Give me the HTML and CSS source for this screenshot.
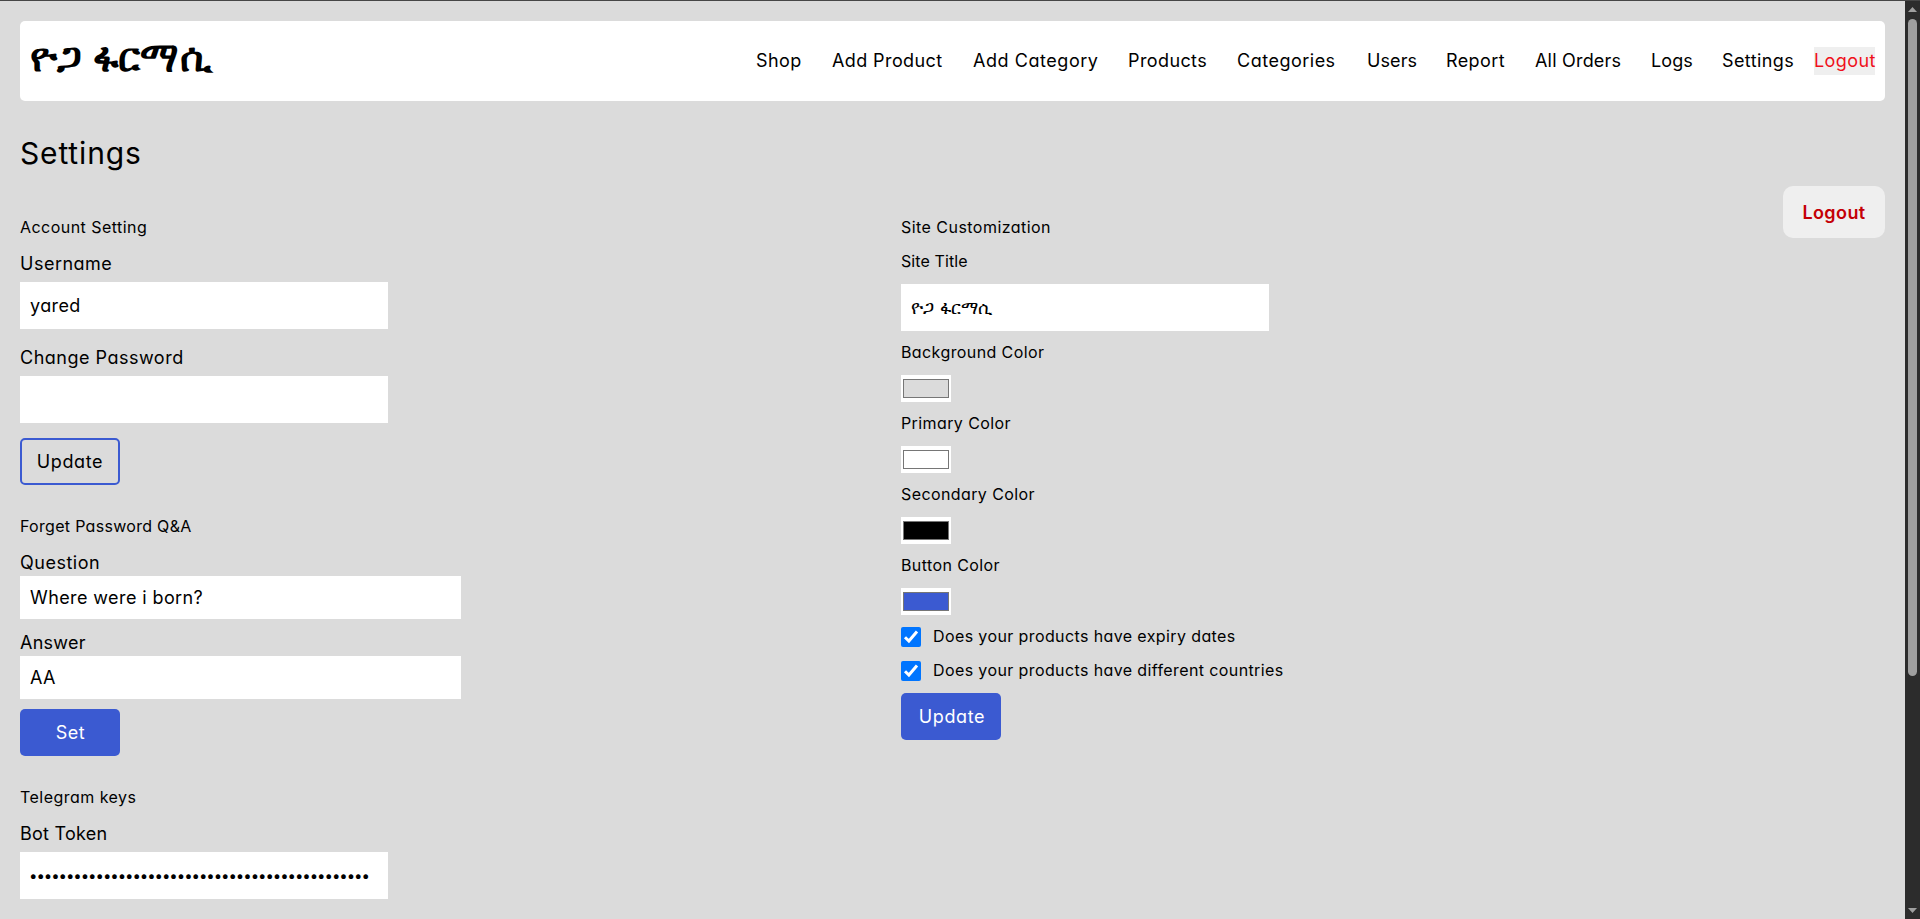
FILE: index.html
```
<!DOCTYPE html>
<html lang="en">
<head>
<meta charset="utf-8">
<title>Settings</title>
<link rel="stylesheet" href="styles.css">
</head>
<body>
<div class="window">
<div class="page">
  <header class="navbar">
    <div class="brand">ዮጋ ፋርማሲ</div>
    <nav class="nav">
      <a class="link shop">Shop</a>
      <a class="link add-product">Add Product</a>
      <a class="link add-category">Add Category</a>
      <a class="link products">Products</a>
      <a class="link categories">Categories</a>
      <a class="link users">Users</a>
      <a class="link report">Report</a>
      <a class="link orders">All Orders</a>
      <a class="link logs">Logs</a>
      <a class="link settings">Settings</a>
      <button class="nav-logout">Logout</button>
    </nav>
  </header>
  <h1 class="title">Settings</h1>
  <main class="columns">
    <div class="col-left">
      <section class="group account">
        <h2 class="heading">Account Setting</h2>
        <label class="label">Username</label>
        <input class="input" type="text" value="yared">
        <label class="label second">Change Password</label>
        <input class="input" type="password">
        <button class="btn outline">Update</button>
      </section>
      <section class="group recovery">
        <h2 class="heading question-heading">Forget Password Q&amp;A</h2>
        <label class="label">Question</label>
        <input class="input wide" type="text" value="Where were i born?">
        <label class="label third">Answer</label>
        <input class="input wide" type="text" value="AA">
        <button class="btn set">Set</button>
      </section>
      <section class="group telegram">
        <h2 class="heading">Telegram keys</h2>
        <label class="label token-label">Bot Token</label>
        <div class="input token">••••••••••••••••••••••••••••••••••••••••••••••</div>
      </section>
    </div>
    <div class="col-right">
      <h2 class="heading">Site Customization</h2>
      <label class="small-label title-label">Site Title</label>
      <input class="input site-title" type="text" value="ዮጋ ፋርማሲ">
      <label class="small-label">Background Color</label>
      <div class="color"><div class="swatch grey"></div></div>
      <label class="small-label">Primary Color</label>
      <div class="color"><div class="swatch white"></div></div>
      <label class="small-label">Secondary Color</label>
      <div class="color"><div class="swatch black"></div></div>
      <label class="small-label">Button Color</label>
      <div class="color"><div class="swatch blue"></div></div>
      <div class="check-row">
        <svg class="check" viewBox="0 0 20 20"><rect width="20" height="20" rx="2"/><path d="M4 10.2 7.9 14 16 4.6"/></svg>
        <span class="check-text">Does your products have expiry dates</span>
      </div>
      <div class="check-row">
        <svg class="check" viewBox="0 0 20 20"><rect width="20" height="20" rx="2"/><path d="M4 10.2 7.9 14 16 4.6"/></svg>
        <span class="check-text">Does your products have different countries</span>
      </div>
      <button class="btn save">Update</button>
    </div>
    <button class="logout">Logout</button>
  </main>
</div>
<div class="scrollbar">
  <svg class="arrow" viewBox="0 0 9 5"><path d="M4.5 0 9 5H0z"/></svg>
  <div class="thumb"></div>
  <svg class="arrow down" viewBox="0 0 9 5"><path d="M0 0h9L4.5 5z"/></svg>
</div>
</div>
</body>
</html>
```
FILE: styles.css
```
* { box-sizing: border-box; }
body { margin: 0; height: 919px; overflow: hidden; background: #dbdbdb; color: #000; }
body, button, input {
  font-family: Inter, "Noto Sans", sans-serif;
  font-feature-settings: "cv11";
  font-size: 18px;
  line-height: 27px;
  letter-spacing: 0.4px;
}
button { border: 0; padding: 0; }
h1, h2 { margin: 0; font-weight: 400; }
.window { display: flex; height: 919px; border-top: 1px solid #464646; }
.page { flex: 1; padding: 20px; overflow: hidden; }

.navbar { display: flex; align-items: center; justify-content: space-between; height: 80px; padding: 0 10px; background: #fff; border-radius: 5px; }
.brand { padding-bottom: 8px; font-size: 40px; line-height: 48px; font-weight: 700; white-space: nowrap; }
.nav { display: flex; align-items: center; gap: 30px; }
.link { padding-bottom: 2px; white-space: nowrap; }
.shop { width: 46px; }
.add-product { width: 111px; }
.add-category { width: 125px; letter-spacing: 0.55px; }
.products { width: 79px; }
.categories { width: 100px; letter-spacing: 0.5px; }
.users { width: 49px; letter-spacing: 0.1px; }
.report { width: 59px; }
.orders { width: 86px; letter-spacing: 0.2px; }
.logs { width: 41px; letter-spacing: 0.1px; }
.settings { width: 72px; }
.nav-logout { width: 61px; height: 28px; margin-left: -10px; padding-bottom: 2px; background: #efefef; color: #f00f1a; white-space: nowrap; }

.title { margin-top: 30px; font-size: 30px; line-height: 45px; letter-spacing: 0.85px; }
.columns { display: flex; align-items: flex-start; margin-top: 10px; }
.col-left { width: 881px; padding-top: 29px; }
.col-right { flex: 1; display: flex; flex-direction: column; align-items: flex-start; padding-top: 29px; }
.group { display: flex; flex-direction: column; align-items: flex-start; }
.recovery, .telegram { margin-top: 29px; }
.heading { font-size: 16px; line-height: 24px; letter-spacing: 0.46px; }
.question-heading { letter-spacing: 0.3px; }
.label { margin-top: 11px; letter-spacing: 0.5px; }
.label.second { margin-top: 15px; }
.label.third { margin-top: 10px; letter-spacing: 0.25px; }
.label.token-label { letter-spacing: 0.25px; }
.input { width: 368px; height: 47px; margin-top: 5px; padding: 0 10px; border: 0; background: #fff; color: #000; }
.input.wide { width: 441px; height: 43px; margin-top: 0; }
.btn { width: 100px; height: 47px; border-radius: 5px; background: #3b5ad1; color: #fff; letter-spacing: 0.6px; }
.outline { margin-top: 15px; border: 2px solid #3b5ad1; background: transparent; color: #000; }
.set { margin-top: 10px; padding-left: 1px; }
.token { padding-left: 9px; font-size: 15px; line-height: 47px; letter-spacing: -1.05px; white-space: nowrap; }

.small-label { margin-top: 9px; font-size: 16px; line-height: 24px; }
.heading + .small-label { margin-top: 10px; }
.title-label { letter-spacing: 0.1px; }
.input.site-title { margin-top: 11px; letter-spacing: 0.2px; }
.color { width: 50px; height: 27px; margin-top: 11px; padding: 4px 2px; background: #fff; }
.swatch { height: 19px; border: 1px solid #767676; }
.grey { background: #dbdbdb; }
.white { background: #fff; }
.black { background: #000; }
.blue { background: #3b5ad1; }
.check-row { display: flex; gap: 12px; align-items: center; height: 24px; margin-top: 10px; font-size: 16px; line-height: 24px; }
.check { width: 20px; height: 20px; fill: #0075ff; }
.check path { fill: none; stroke: #fff; stroke-width: 3; }
.check-text { padding-bottom: 2px; letter-spacing: 0.39px; }
.save { margin-top: 10px; padding-left: 2px; }
.logout { width: 102px; height: 52px; border-radius: 10px; background: #efefef; color: #c40006; font-weight: 600; }

.scrollbar { display: flex; flex-direction: column; align-items: center; width: 15px; padding: 6px 0; background: #2c2c2c; }
.arrow { width: 9px; height: 5px; fill: #9f9f9f; }
.thumb { width: 9px; height: 657px; margin-top: 7px; border-radius: 5px; background: #9f9f9f; }
.down { margin-top: auto; }
```
